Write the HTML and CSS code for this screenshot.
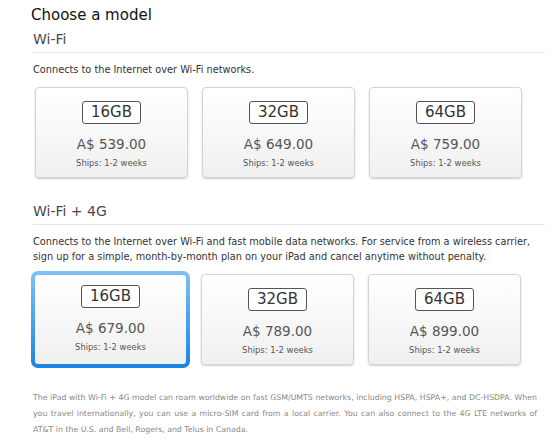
FILE: index.html
```html
<!DOCTYPE html>
<html lang="en">
<head>
  <meta charset="UTF-8">
  <meta name="viewport" content="width=device-width, initial-scale=1.0">
  <title>Choose a model</title>
  <link rel="stylesheet" href="styles.css">
</head>
<body>

  <div class="page">
    <h1>Choose a model</h1>

    <!-- Wi-Fi only -->
    <div class="section">
      <h2>Wi-Fi</h2>
      <p class="desc">Connects to the Internet over Wi-Fi networks.</p>
      <div class="cards">
        <div class="card">
          <span class="size">16GB</span>
          <div class="price">A$ 539.00</div>
          <div class="ships">Ships: 1-2 weeks</div>
        </div>
        <div class="card">
          <span class="size">32GB</span>
          <div class="price">A$ 649.00</div>
          <div class="ships">Ships: 1-2 weeks</div>
        </div>
        <div class="card">
          <span class="size">64GB</span>
          <div class="price">A$ 759.00</div>
          <div class="ships">Ships: 1-2 weeks</div>
        </div>
      </div>
    </div>

    <!-- Wi-Fi + 4G -->
    <div class="section section-4g">
      <h2>Wi-Fi + 4G</h2>
      <p class="desc">Connects to the Internet over Wi-Fi and fast mobile data networks. For service from a wireless carrier, sign up for a simple, month-by-month plan on your iPad and cancel anytime without penalty.</p>
      <div class="cards">
        <div class="card selected">
          <span class="size">16GB</span>
          <div class="price">A$ 679.00</div>
          <div class="ships">Ships: 1-2 weeks</div>
        </div>
        <div class="card">
          <span class="size">32GB</span>
          <div class="price">A$ 789.00</div>
          <div class="ships">Ships: 1-2 weeks</div>
        </div>
        <div class="card">
          <span class="size">64GB</span>
          <div class="price">A$ 899.00</div>
          <div class="ships">Ships: 1-2 weeks</div>
        </div>
      </div>
    </div>

    <p class="note">The iPad with Wi-Fi + 4G model can roam worldwide on fast GSM/UMTS networks, including HSPA, HSPA+, and DC-HSDPA. When you travel internationally, you can use a micro-SIM card from a local carrier. You can also connect to the 4G LTE networks of AT&amp;T in the U.S. and Bell, Rogers, and Telus in Canada.</p>
  </div>

</body>
</html>
```

FILE: styles.css
```css
body {
  margin: 0;
  background-color: #fff;
  font-family: "DejaVu Sans", sans-serif;
  color: #333;
}
.page {
  padding: 5px 0 0 33px;
  width: 512px;
}
h1 {
  margin: 0 0 0 -2px;
  font-size: 15px;
  font-weight: normal;
  line-height: 20px;
  color: #111;
}
h2 {
  margin: 6px 0 0;
  font-size: 14px;
  font-weight: normal;
  line-height: 16px;
  color: #4a4a4a;
  padding-bottom: 5px;
  border-bottom: 1px solid #e6e6e6;
}
.desc {
  margin: 9px 0 0;
  font-size: 9.75px;
  line-height: 15px;
  color: #333;
}
.cards {
  display: flex;
  gap: 14px;
  margin: 10px 0 0 2px;
}
.card {
  width: 151px;
  height: 89px;
  border: 1px solid #d4d4d4;
  border-radius: 4px;
  background: linear-gradient(#fff, #f0f0f0);
  box-shadow: 0 1px 2px rgba(0, 0, 0, 0.2);
  text-align: center;
  color: #555;
  flex: none;
}
.card.selected {
  border: 4px solid transparent;
  border-radius: 7px;
  margin: -3px -3px -4px -4px;
  background: linear-gradient(#fff, #f0f0f0) padding-box,
              linear-gradient(#7cc2f7, #1a84e2) border-box;
  box-shadow: none;
}
.size {
  display: inline-block;
  margin-top: 13px;
  padding: 0 8px;
  height: 21px;
  line-height: 21px;
  border: 1.5px solid #555;
  border-radius: 3px;
  font-size: 15px;
  color: #333;
  background: #fff;
}
.selected .size {
  margin-top: 10px;
}
.price {
  margin-top: 12px;
  font-size: 13.5px;
  line-height: 17px;
}
.ships {
  margin-top: 4px;
  font-size: 8.4px;
  line-height: 12px;
}
.section-4g {
  margin-top: 25px;
}
.note {
  margin: 25px 0 0;
  width: 504px;
  font-size: 7.8px;
  line-height: 16px;
  color: #888;
  text-align: justify;
}
```
